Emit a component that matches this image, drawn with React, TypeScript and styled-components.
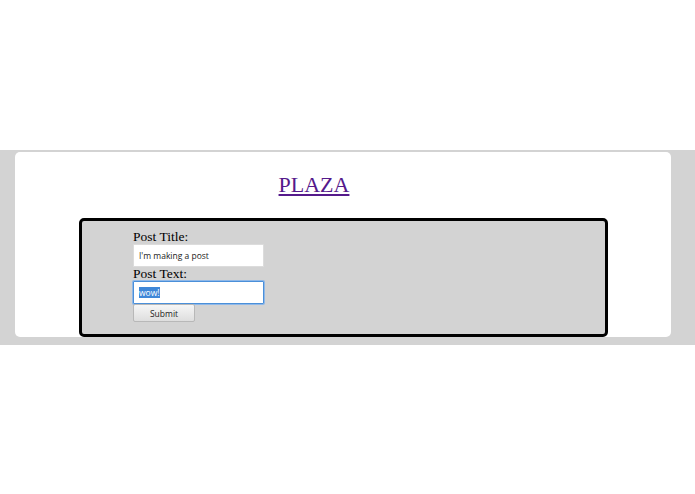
import React, { useEffect, useRef } from 'react'
import styled, { createGlobalStyle } from 'styled-components'

const GlobalStyle = createGlobalStyle`
  body {
    margin: 0;
    background: #ffffff;
    font-family: 'Liberation Serif', 'Times New Roman', serif;
  }
`

const Page = styled.div`
  padding-top: 150px;
`

const Band = styled.div`
  background: #d3d3d3;
  padding: 2px 24px 8px 15px;
`

const Card = styled.div`
  background: #ffffff;
  border-radius: 5px;
  display: flex;
  flex-direction: column;
`

const Header = styled.header`
  display: flex;
  justify-content: center;
  padding: 20px 58px 20px 0;
`

const TitleLink = styled.a`
  font-family: 'Liberation Serif', 'Times New Roman', serif;
  font-size: 22px;
  line-height: 26px;
  color: #551a8b;
  text-decoration: underline;
`

const PostBox = styled.div`
  margin: 0 63px 0 64px;
  background: #d3d3d3;
  border: 3px solid #000000;
  border-radius: 5px;
  padding: 9px 51px 12px;
`

const Form = styled.form`
  display: flex;
  flex-direction: column;
  align-items: flex-start;
`

const Label = styled.label`
  display: block;
  font-size: 13.5px;
  line-height: 14px;
  color: #000000;
`

const TextInput = styled.input<{ $focused?: boolean }>`
  box-sizing: border-box;
  width: 131px;
  height: 23px;
  margin: 0;
  padding: 0 5px;
  background: #ffffff;
  border: 1px solid ${(p) => (p.$focused ? '#4a8fd9' : '#dcdcdc')};
  box-shadow: ${(p) => (p.$focused ? '0 0 0 1px #8fb8e8' : 'none')};
  border-radius: 1px;
  outline: none;
  font-family: 'Open Sans', 'Noto Sans', sans-serif;
  font-size: 8.5px;
  color: #222222;

  &::selection {
    background: #3f87d8;
    color: #ffffff;
  }
`

const SubmitButton = styled.button`
  box-sizing: border-box;
  width: 62px;
  height: 18px;
  margin: 0;
  padding: 0;
  background: linear-gradient(#f6f6f6, #dedede);
  border: 1px solid #b8b8b8;
  border-radius: 2px;
  font-family: 'Open Sans', 'Noto Sans', sans-serif;
  font-size: 8.5px;
  color: #222222;
`

export default function App() {
  const textRef = useRef<HTMLInputElement>(null)

  useEffect(() => {
    const el = textRef.current
    if (el) {
      el.focus()
      el.select()
    }
  }, [])

  return (
    <>
      <GlobalStyle />
      <Page>
        <Band>
          <Card>
            <Header>
              <TitleLink href="#">PLAZA</TitleLink>
            </Header>
            <PostBox>
              <Form onSubmit={(e) => e.preventDefault()}>
                <Label htmlFor="post-title">Post Title:</Label>
                <TextInput id="post-title" type="text" defaultValue="I'm making a post" />
                <Label htmlFor="post-text">Post Text:</Label>
                <TextInput id="post-text" ref={textRef} type="text" defaultValue="wow!" $focused />
                <SubmitButton type="submit">Submit</SubmitButton>
              </Form>
            </PostBox>
          </Card>
        </Band>
      </Page>
    </>
  )
}
